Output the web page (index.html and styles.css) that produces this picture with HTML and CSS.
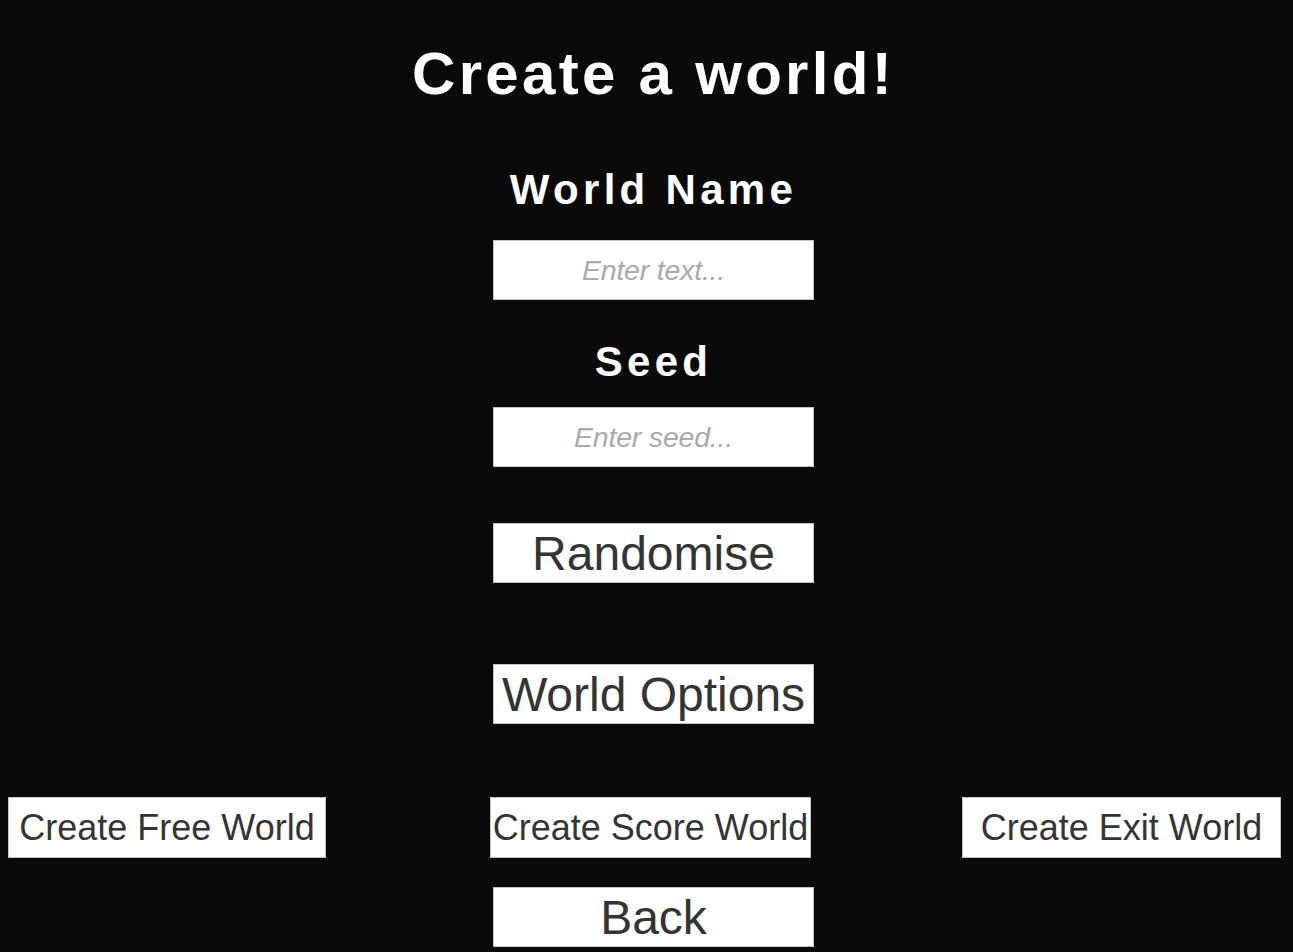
FILE: index.html
```html
<!DOCTYPE html>
<html lang="en">
<head>
<meta charset="utf-8">
<title>Create a world!</title>
<link rel="stylesheet" href="styles.css">
</head>
<body>
<main class="screen">
  <h1 class="title">Create a world!</h1>
  <h2 class="label label-name">World Name</h2>
  <div class="field field-name"><span class="placeholder">Enter text...</span></div>
  <h2 class="label label-seed">Seed</h2>
  <div class="field field-seed"><span class="placeholder">Enter seed...</span></div>
  <button class="btn btn-random">Randomise</button>
  <button class="btn btn-options">World Options</button>
  <div class="create-row">
    <button class="btn btn-small btn-free">Create Free World</button>
    <button class="btn btn-small btn-score">Create Score World</button>
    <button class="btn btn-small btn-exit">Create Exit World</button>
  </div>
  <button class="btn btn-back">Back</button>
</main>
</body>
</html>
```
FILE: styles.css
```css
* { box-sizing: border-box; }
html, body {
  margin: 0;
  padding: 0;
  background: #0a0a0a;
  height: 100%;
  overflow: hidden;
}
body {
  font-family: "Liberation Sans", Arial, sans-serif;
}
.screen {
  display: flex;
  flex-direction: column;
  align-items: center;
  padding-left: 14px;
  padding-top: 44px;
  width: 1293px;
  height: 952px;
}
.title {
  margin: 0;
  font-size: 60px;
  line-height: 60px;
  font-weight: 700;
  color: #ffffff;
  letter-spacing: 3.3px;
}
.label {
  margin: 0;
  font-size: 42px;
  line-height: 42px;
  font-weight: 700;
  color: #ffffff;
  letter-spacing: 4.3px;
}
.label-name { margin-top: 65px; }
.label-seed { margin-top: 41px; }
.field {
  width: 321px;
  height: 60px;
  background: #ffffff;
  border: 1px solid #c4c4c4;
  display: flex;
  align-items: center;
  justify-content: center;
}
.field-name { margin-top: 29px; }
.field-seed { margin-top: 24px; }
.placeholder {
  font-style: italic;
  font-size: 28.5px;
  color: #aaaaaa;
  letter-spacing: -0.2px;
}
.btn {
  font-family: "Liberation Sans", Arial, sans-serif;
  background: #ffffff;
  border: 1px solid #c4c4c4;
  color: #343434;
  width: 321px;
  height: 60px;
  padding: 0;
  margin: 0;
  display: flex;
  align-items: center;
  justify-content: center;
  white-space: nowrap;
  overflow: visible;
  font-size: 48px;
}
.btn-random { margin-top: 56px; }
.btn-options { margin-top: 81px; font-size: 48px; }
.create-row {
  margin-top: 73px;
  margin-left: -14px;
  width: 1293px;
  padding-left: 8px;
  display: grid;
  grid-template-columns: 318px 164px 321px 151px 319px;
}
.btn-small {
  font-size: 36px;
  width: auto;
  height: 61px;
}
.btn-score { grid-column: 3; }
.btn-exit { grid-column: 5; }
.btn-free { grid-column: 1; }
.btn-back { margin-top: 29px; font-size: 48px; }
```
